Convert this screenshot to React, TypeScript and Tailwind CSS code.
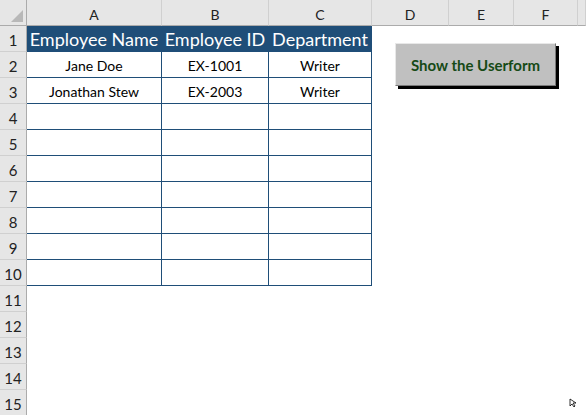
const cols = ["A", "B", "C", "D", "E", "F", ""];
const rows = Array.from({ length: 15 }, (_, i) => i + 1);

const data: Record<number, string[]> = {
  1: ["Employee Name", "Employee ID", "Department"],
  2: ["Jane Doe", "EX-1001", "Writer"],
  3: ["Jonathan Stew", "EX-2003", "Writer"],
};

function Cell({ row, col }: { row: number; col: number }) {
  const inTable = row <= 10 && col < 3;
  if (!inTable) return <div className="h-[26px] bg-white" />;
  if (row === 1) {
    return (
      <div className="flex h-[26px] items-center justify-center border-r border-b border-[#1f4e78] bg-[#1f4e78] text-[18px] leading-none text-white">
        {data[1][col]}
      </div>
    );
  }
  return (
    <div className="flex h-[26px] items-center justify-center border-r border-b border-[#1f4e78] bg-white pt-[1px] text-[14px] text-black">
      {data[row]?.[col] ?? ""}
    </div>
  );
}

export default function App() {
  return (
    <div className="relative h-[415px] w-[586px] overflow-hidden bg-white font-['Lato',sans-serif]">
      <div className="grid grid-cols-[27px_135px_107px_103px_77px_65px_64px_1fr]">
        {/* corner */}
        <div className="relative h-[26px] border-r border-b border-[#ababab] bg-[#e6e6e6]">
          <div className="absolute right-[3px] bottom-[3px] h-0 w-0 border-b-[12px] border-l-[12px] border-b-[#b8b8b8] border-l-transparent" />
        </div>
        {cols.map((c, i) => (
          <div
            key={i}
            className="flex h-[26px] items-end justify-center border-r border-b border-r-[#d0d0d0] border-b-[#ababab] bg-[#e6e6e6] pb-[3px] text-[14px] leading-none text-[#222]"
          >
            {c}
          </div>
        ))}
        {rows.map((r) => (
          <div key={r} className="contents">
            <div className="flex h-[26px] items-end justify-center border-r border-b border-r-[#ababab] border-b-[#d0d0d0] bg-[#e6e6e6] pb-[3px] text-[15px] leading-none text-[#222]">
              {r}
            </div>
            {cols.map((_, ci) => (
              <Cell key={ci} row={r} col={ci} />
            ))}
          </div>
        ))}
      </div>

      <button className="absolute top-[43px] left-[395px] flex h-[43px] w-[161px] items-center justify-center border border-t-[#e8e8e8] border-r-[#7a7a7a] border-b-[#7a7a7a] border-l-[#e8e8e8] bg-[#c0c0c0] pt-[1px] text-[15px] font-bold text-[#164a16] shadow-[3px_3px_0_#000]">
        Show the Userform
      </button>

      <svg className="absolute top-[398px] left-[569px]" width="8" height="10" viewBox="0 0 8 10">
        <path d="M1 1 L1 8 L3 6 L5 9 L6 8 L4 5 L7 5 Z" fill="#fff" stroke="#000" strokeWidth="0.8" />
      </svg>
    </div>
  );
}
